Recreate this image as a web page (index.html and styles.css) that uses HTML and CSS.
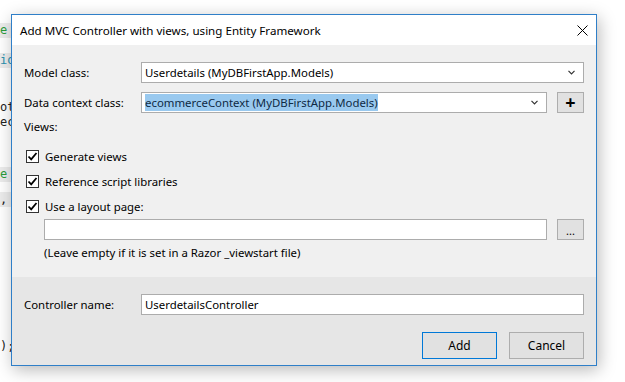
FILE: index.html
```html
<!DOCTYPE html>
<html lang="en">
<head>
<meta charset="UTF-8">
<title>Add MVC Controller with views, using Entity Framework</title>
<link rel="stylesheet" href="styles.css">
</head>
<body>
<div class="desktop">

<!-- Code editor peeking out behind the dialog -->
<div class="code-strip">
    <div class="code-line hl green">e</div>
    <div class="code-line hl teal gap-1">io</div>
    <div class="code-line gap-2">ot</div>
    <div class="code-line">ec</div>
    <div class="code-line hl green gap-3">e</div>
    <div class="code-line hl gap-4">,</div>
    <div class="code-line gap-5">);</div>
</div>

<!-- Dialog -->
<div class="dialog">
    <div class="titlebar">
        <span class="title">Add MVC Controller with views, using Entity Framework</span>
        <svg class="close" width="11" height="11" viewBox="0 0 11 11">
            <path d="M0.5 0.5 L10.5 10.5 M10.5 0.5 L0.5 10.5" stroke="#000" stroke-width="1"/>
        </svg>
    </div>

    <div class="dialog-body">
        <div class="row">
            <label class="field-label">Model class:</label>
            <div class="combo">
                <span class="combo-text">Userdetails (MyDBFirstApp.Models)</span>
                <svg class="chevron" width="7" height="5" viewBox="0 0 7 5"><path d="M0.5 0.8 L3.5 3.8 L6.5 0.8" fill="none" stroke="#333" stroke-width="1.2"/></svg>
            </div>
        </div>

        <div class="row">
            <label class="field-label">Data context class:</label>
            <div class="combo">
                <span class="combo-text selected">ecommerceContext (MyDBFirstApp.Models)</span>
                <svg class="chevron" width="7" height="5" viewBox="0 0 7 5"><path d="M0.5 0.8 L3.5 3.8 L6.5 0.8" fill="none" stroke="#333" stroke-width="1.2"/></svg>
            </div>
            <button class="small-btn plus">+</button>
        </div>

        <div class="views-label">Views:</div>

        <div class="check-row">
            <span class="checkbox"><svg width="11" height="11" viewBox="0 0 11 11"><path d="M1.5 5.5 L4.2 8.3 L9.5 2" fill="none" stroke="#000" stroke-width="1.8"/></svg></span>
            <span>Generate views</span>
        </div>
        <div class="check-row">
            <span class="checkbox"><svg width="11" height="11" viewBox="0 0 11 11"><path d="M1.5 5.5 L4.2 8.3 L9.5 2" fill="none" stroke="#000" stroke-width="1.8"/></svg></span>
            <span>Reference script libraries</span>
        </div>
        <div class="check-row">
            <span class="checkbox"><svg width="11" height="11" viewBox="0 0 11 11"><path d="M1.5 5.5 L4.2 8.3 L9.5 2" fill="none" stroke="#000" stroke-width="1.8"/></svg></span>
            <span>Use a layout page:</span>
        </div>

        <div class="layout-row">
            <div class="textbox"></div>
            <button class="small-btn dots">...</button>
        </div>
        <div class="hint">(Leave empty if it is set in a Razor _viewstart file)</div>
    </div>

    <div class="dialog-footer">
        <div class="row">
            <label class="field-label">Controller name:</label>
            <div class="textbox"><span class="combo-text">UserdetailsController</span></div>
        </div>
        <div class="buttons">
            <button class="btn default">Add</button>
            <button class="btn">Cancel</button>
        </div>
    </div>
</div>

</div>
</body>
</html>
```

FILE: styles.css
```css
body {
    margin: 0;
    padding: 0;
    background: #ffffff;
    font-family: "Noto Sans", "Open Sans", sans-serif;
    font-size: 11.4px;
    color: #000;
}

.desktop {
    display: flex;
    width: 625px;
    height: 382px;
    overflow: hidden;
}

/* Code editor strip */
.code-strip {
    width: 11px;
    flex-shrink: 0;
    overflow: hidden;
    padding-top: 23px;
    font-family: "DejaVu Sans Mono", monospace;
    font-size: 12px;
    display: flex;
    flex-direction: column;
}

.code-line {
    height: 15px;
    line-height: 15px;
    white-space: nowrap;
    color: #222;
}

.code-line.hl { background: #ececec; }
.code-line.green { color: #2a9c3a; }
.code-line.teal { color: #2b91af; }
.gap-1 { margin-top: 15px; }
.gap-2 { margin-top: 32px; }
.gap-3 { margin-top: 37px; }
.gap-4 { margin-top: 10px; }
.gap-5 { margin-top: 132px; }

/* Dialog window */
.dialog {
    width: 586px;
    height: 352px;
    margin-top: 14px;
    box-sizing: border-box;
    border: 1px solid #2f7fc8;
    background: #f0f0f0;
    box-shadow: 2px 4px 16px rgba(0, 0, 0, 0.28);
    display: flex;
    flex-direction: column;
    flex-shrink: 0;
}

.titlebar {
    height: 30px;
    background: #ffffff;
    display: flex;
    align-items: center;
    justify-content: space-between;
    padding: 0 8px 0 8px;
}

.title {
    font-size: 11.6px;
}

.dialog-body {
    height: 232px;
    box-sizing: border-box;
    padding: 17px 12px 0 12px;
    display: flex;
    flex-direction: column;
}

.row {
    display: flex;
    align-items: center;
    height: 21px;
    margin-bottom: 9px;
}

.field-label {
    width: 117px;
    flex-shrink: 0;
}

.combo, .textbox {
    flex: 1;
    height: 21px;
    box-sizing: border-box;
    border: 1px solid #acacac;
    background: #ffffff;
    display: flex;
    align-items: center;
    justify-content: space-between;
    padding: 0 8px 0 3px;
}

.combo-text {
    line-height: 17px;
    white-space: nowrap;
}

.combo-text.selected {
    background: #99c9ef;
    color: #0f2a44;
}

.small-btn {
    width: 27px;
    height: 21px;
    margin-left: 10px;
    box-sizing: border-box;
    border: 1px solid #adadad;
    background: #e1e1e1;
    font-family: "Noto Sans", sans-serif;
    padding: 0;
    color: #000;
}

.plus {
    font-size: 18px;
    font-weight: bold;
    line-height: 17px;
}

.dots {
    font-size: 11px;
    line-height: 22px;
}

.views-label {
    height: 16px;
    line-height: 16px;
    margin-top: -3px;
    margin-bottom: 9px;
}

.check-row {
    display: flex;
    align-items: center;
    height: 25px;
}

.checkbox {
    width: 13px;
    height: 13px;
    box-sizing: border-box;
    border: 1px solid #333;
    background: #fff;
    margin-left: 2px;
    margin-right: 6px;
    display: flex;
    align-items: center;
    justify-content: center;
}

.layout-row {
    display: flex;
    height: 21px;
    margin-left: 20px;
}

.hint {
    margin-left: 20px;
    margin-top: 5px;
    line-height: 16px;
}

.dialog-footer {
    flex: 1;
    background: #e6e6e6;
    padding: 17px 12px 0 12px;
}

.dialog-footer .row {
    margin-bottom: 17px;
}

.buttons {
    display: flex;
    justify-content: flex-end;
    gap: 12px;
}

.btn {
    width: 75px;
    height: 27px;
    box-sizing: border-box;
    border: 1px solid #adadad;
    background: #e1e1e1;
    font-family: "Noto Sans", sans-serif;
    font-size: 12px;
    color: #000;
    padding: 0;
}

.btn.default {
    border-color: #0078d7;
}
```
